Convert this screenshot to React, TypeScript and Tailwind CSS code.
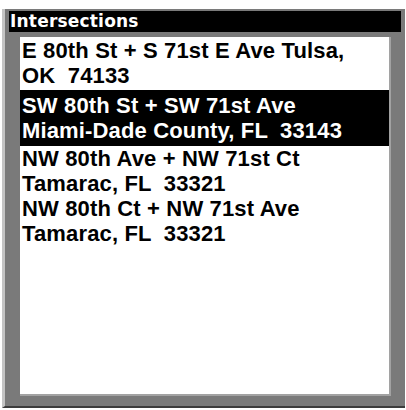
const items = [
  { line1: "E 80th St + S 71st E Ave Tulsa,", line2: "OK  74133", selected: false, pad: "pt-[1px] pb-[2px]" },
  { line1: "SW 80th St + SW 71st Ave", line2: "Miami-Dade County, FL  33143", selected: true, pad: "pt-[3px] pb-[3px]" },
  { line1: "NW 80th Ave + NW 71st Ct", line2: "Tamarac, FL  33321", selected: false, pad: "pt-0 pb-0" },
  { line1: "NW 80th Ct + NW 71st Ave", line2: "Tamarac, FL  33321", selected: false, pad: "pt-0 pb-0" },
];

export default function App() {
  return (
    <div className="w-[406px] h-[410px] bg-white pt-[9px] pl-[2px] pr-px pb-[2px]">
      {/* ── Device frame ── */}
      <div className="flex h-full flex-col border-l-[3px] border-l-[#c4c4c4] border-b-2 border-b-[#3c3c3c] bg-[#7a7a7a] pt-[2px] px-[4px]">
        {/* ── Title bar ── */}
        <div className="flex h-[21px] items-center bg-black pl-[1px] font-['DejaVu_Sans',sans-serif] text-[17px] font-bold leading-none tracking-[0.2px] text-white">
          Intersections
        </div>

        {/* ── List ── */}
        <div className="mt-[5px] mb-[10px] ml-[11px] mr-[10px] flex-1 border-r-2 border-b-2 border-[#a2a2a2]">
          <div className="h-full bg-white font-['Liberation_Sans',Arial,sans-serif] text-[22px] font-bold leading-[25px] tracking-[0.15px]">
            {items.map((item) => (
              <div
                key={item.line1}
                className={`${item.pad} pl-[2px] whitespace-pre ${
                  item.selected ? "bg-black text-white" : "text-black"
                }`}
              >
                <div>{item.line1}</div>
                <div>{item.line2}</div>
              </div>
            ))}
          </div>
        </div>
      </div>
    </div>
  );
}
